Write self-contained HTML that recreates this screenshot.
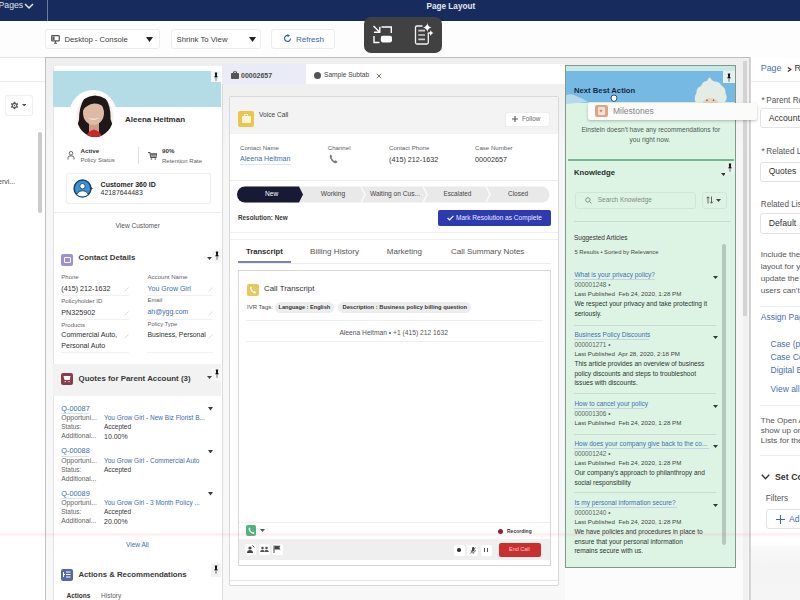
<!DOCTYPE html>
<html><head><meta charset="utf-8">
<style>
*{box-sizing:border-box;margin:0;padding:0}
html,body{width:800px;height:600px;overflow:hidden;background:#fff;font-family:"Liberation Sans",sans-serif;color:#2b2b2b}
div,span,svg{position:absolute}
.t{white-space:nowrap;line-height:1}
.g{color:#626262}
.l{color:#3a6db0}
.b{font-weight:bold}
.ln{height:1px;background:#e6e6e6}
</style></head>
<body>
<!-- ========== TOP NAV ========== -->
<div style="left:0;top:0;width:800px;height:21px;background:#172c5c"></div>
<div style="left:47px;top:0;width:1px;height:21px;background:#6a7ca3"></div>
<div class="t" style="left:-1.5px;top:0.6px;font-size:8.7px;color:#dfe6f2">Pages</div>
<svg style="left:24px;top:2px" width="10" height="8" viewBox="0 0 10 8"><path d="M1 2 L5 6 L9 2" stroke="#dfe6f2" stroke-width="1.5" fill="none"/></svg>
<div class="t b" style="left:426.5px;top:2.5px;font-size:8.2px;color:#e3e9f4">Page Layout</div>

<!-- ========== TOOLBAR ========== -->
<div style="left:0;top:21px;width:800px;height:36px;background:#fdfdfd"></div>
<div style="left:45px;top:29px;width:115px;height:20px;background:#fff;border:1px solid #ececec;border-radius:3px"></div>
<svg style="left:51px;top:35px" width="9" height="9" viewBox="0 0 9 9"><rect x="0.7" y="0.7" width="7.6" height="5.2" rx="0.6" fill="none" stroke="#555" stroke-width="1.2"/><rect x="1.5" y="1.5" width="2" height="3.6" fill="#555"/><path d="M4.5 6 V8 M3 8.3 H6" stroke="#555" stroke-width="1.1"/></svg>
<div class="t" style="left:64.5px;top:35.5px;font-size:7.7px;color:#3e3e3e">Desktop - Console</div>
<svg style="left:146px;top:37px" width="7" height="5" viewBox="0 0 7 5"><path d="M0 0 H7 L3.5 5Z" fill="#222"/></svg>
<div style="left:171px;top:29px;width:90px;height:20px;background:#fff;border:1px solid #ececec;border-radius:3px"></div>
<div class="t" style="left:176.5px;top:35.5px;font-size:7.75px;color:#3e3e3e">Shrink To View</div>
<svg style="left:249px;top:37px" width="7" height="5" viewBox="0 0 7 5"><path d="M0 0 H7 L3.5 5Z" fill="#222"/></svg>
<div style="left:271px;top:29px;width:64px;height:20px;background:#fff;border:1px solid #ececec;border-radius:3px"></div>
<svg style="left:283px;top:34px" width="9" height="9" viewBox="0 0 9 9"><path d="M7.5 4.5 A3 3 0 1 1 5.5 1.6" fill="none" stroke="#3867b0" stroke-width="1.2"/><path d="M4.2 0 L7.2 1.5 L4.6 3.3Z" fill="#3867b0"/></svg>
<div class="t" style="left:296px;top:35.5px;font-size:8px;color:#3867b0">Refresh</div>

<!-- left side panel -->
<div style="left:0;top:57px;width:45px;height:1px;background:#e4e4e4"></div>
<div style="left:0;top:81px;width:45px;height:1px;background:#ececec"></div>
<div style="left:4.5px;top:95px;width:28px;height:20.5px;background:#fff;border:1px solid #f0f0f0;border-radius:3px;box-shadow:0 0 1px rgba(0,0,0,.06)"></div>
<svg style="left:9px;top:99.5px" width="11" height="11" viewBox="0 0 11 11"><path d="M8.25 6.04 L9.20 6.74 L8.42 8.08 L7.34 7.61 L6.41 8.15 L6.27 9.32 L4.73 9.32 L4.59 8.15 L3.66 7.61 L2.58 8.08 L1.80 6.74 L2.75 6.04 L2.75 4.96 L1.80 4.26 L2.58 2.92 L3.66 3.39 L4.59 2.85 L4.73 1.68 L6.27 1.68 L6.41 2.85 L7.34 3.39 L8.42 2.92 L9.20 4.26 L8.25 4.96Z" fill="#5a5a5a"/><circle cx="5.5" cy="5.5" r="1.6" fill="#fff"/><circle cx="5.5" cy="5.5" r="0.7" fill="#5a5a5a"/></svg>
<svg style="left:21.5px;top:103.5px" width="4.5" height="2.5" viewBox="0 0 4.5 2.5"><path d="M0 0H4.5L2.25 2.5Z" fill="#555"/></svg>
<div class="t" style="left:-2px;top:177.5px;font-size:7px;color:#444">ervi...</div>
<div style="left:38px;top:132px;width:4px;height:81px;background:#cbcbcb;border-radius:2px"></div>

<!-- ========== CANVAS FRAME ========== -->
<div style="left:45px;top:57px;width:705px;height:543px;background:linear-gradient(to bottom,#efefef 0,#f0f0f0 40px,#f6f6f6 90px,#f8f8f8 100%);border-left:1.6px solid #c0c0c0;border-top:1.6px solid #bcbcbc;border-right:1.2px solid #cdcdcd"></div>
<!-- frame scrollbar -->
<div style="left:742.5px;top:63px;width:5px;height:537px;background:#f1f1f1"></div>
<div style="left:743px;top:61px;width:4px;height:255px;background:#d3d3d3"></div>


<!-- ========== LEFT COLUMN CARD ========== -->
<div style="left:52.5px;top:66px;width:170px;height:534px;background:#fff;border-left:1px solid #e4e4e4;border-right:1px solid #dcdcdc"></div>
<div style="left:53px;top:71px;width:168px;height:36px;background:#b3dce6"></div>
<!-- pin box -->
<div style="left:211px;top:71px;width:10px;height:11px;background:#f4f9fb"></div>
<svg style="left:213px;top:72px" width="6" height="9" viewBox="0 0 6 9"><path d="M1.8 0.6 H4.2 L3.9 3.8 L5 5.2 H1 L2.1 3.8Z" fill="#151515"/><path d="M3 5 V8.8" stroke="#333" stroke-width="0.7"/></svg>
<!-- avatar -->
<svg style="left:69px;top:89px" width="50" height="50" viewBox="0 0 50 50">
 <circle cx="24" cy="24.5" r="23.5" fill="#fff"/>
 <clipPath id="av"><ellipse cx="26" cy="27" rx="18.5" ry="21"/></clipPath>
 <g clip-path="url(#av)">
  <rect x="0" y="0" width="50" height="50" fill="#f3efec"/>
  <path d="M15 10 Q26 3 37 10 Q42 18 41.5 30 Q46 40 44 50 L8 50 Q6 40 10 31 Q10 18 15 10Z" fill="#201818"/>
  <path d="M20 33 H30 V43 H20Z" fill="#c99f8a"/>
  <ellipse cx="24.5" cy="24" rx="10.5" ry="12" fill="#dcbaa6"/>
  <path d="M14 21 Q15 9 26 8.5 Q35 9 36.5 19 Q32 14.5 25 14.5 Q18 15.5 14 21Z" fill="#201818"/>
  <path d="M18.5 28.5 Q24.5 33 30.5 28.5 Q24.5 31 18.5 28.5Z" fill="#faf4ef"/>
  <path d="M16.5 50 Q18 42 25 40.5 Q32 42 33.5 50Z" fill="#c62a2c"/>
 </g>
</svg>
<div class="t b" style="left:125px;top:116px;font-size:8px;color:#2d2d2d">Aleena Heitman</div>
<!-- stats -->
<svg style="left:67px;top:151px" width="8" height="9" viewBox="0 0 8 9"><circle cx="4" cy="2.3" r="1.8" fill="none" stroke="#666" stroke-width="1"/><path d="M1 8.5 V6.5 Q1 4.8 4 4.8 Q7 4.8 7 6.5 V8.5" fill="none" stroke="#666" stroke-width="1"/></svg>
<div class="t b" style="left:80.5px;top:148px;font-size:6.2px;color:#333">Active</div>
<div class="t g" style="left:80.5px;top:157.5px;font-size:5.95px">Policy Status</div>
<div style="left:137.5px;top:147px;width:1px;height:17px;background:#e0e0e0"></div>
<svg style="left:148px;top:152px" width="9" height="8" viewBox="0 0 9 8"><path d="M0 0.5 H1.8 L2.8 5.5 H8 L8.6 1.8 H2.2" fill="none" stroke="#555" stroke-width="1.1"/><path d="M3 2.6 H8 M3.5 4 H7.8 M4 1.8 V5.5 M6 1.8 V5.5" stroke="#555" stroke-width="0.7"/><circle cx="3.5" cy="7" r="0.8" fill="#555"/><circle cx="7.3" cy="7" r="0.8" fill="#555"/></svg>
<div class="t b" style="left:162px;top:148px;font-size:6.2px;color:#333">90%</div>
<div class="t g" style="left:162px;top:157.5px;font-size:6px">Retention Rate</div>
<!-- customer 360 box -->
<div style="left:66px;top:173px;width:145px;height:31px;border:1px solid #f0f0f0;border-radius:3px;background:#fff;box-shadow:0 0 1.5px rgba(0,0,0,.07)"></div>
<svg style="left:73px;top:179px" width="21" height="19" viewBox="0 0 21 19">
 <clipPath id="c36"><circle cx="9.5" cy="9.5" r="8"/></clipPath>
 <circle cx="9.5" cy="9.5" r="8.4" fill="#3a93d2" stroke="#17456f" stroke-width="1.5"/>
 <g clip-path="url(#c36)">
  <path d="M3.5 18 Q3.5 11.8 9.5 11.8 Q15.5 11.8 15.5 18Z" fill="#fff" stroke="#17456f" stroke-width="0.9"/>
 </g>
 <circle cx="9.5" cy="7.2" r="2.7" fill="#fff" stroke="#17456f" stroke-width="0.9"/>
 <path d="M17.2 7.6 L19.8 9.6 L17.2 11.4Z" fill="#17456f"/>
</svg>
<div class="t b" style="left:100.6px;top:180.5px;font-size:7px;color:#222">Customer 360 ID</div>
<div class="t" style="left:100.6px;top:190px;font-size:6.9px;color:#333">42187644483</div>
<div class="ln" style="left:53px;top:212px;width:168px;background:#ebebeb"></div>
<div class="t" style="left:115.6px;top:222.5px;font-size:6.55px;color:#555">View Customer</div>

<!-- contact details -->
<div style="left:61px;top:253.5px;width:12px;height:12px;background:#9c8fdb;border-radius:2px"></div>
<div style="left:63.5px;top:256.5px;width:7px;height:6px;border:1px solid #fff;border-radius:1px"></div>
<div class="t b" style="left:78.6px;top:254px;font-size:7.8px;color:#383838">Contact Details</div>
<svg style="left:207px;top:257px" width="5" height="3" viewBox="0 0 5 3"><path d="M0 0H5L2.5 3Z" fill="#444"/></svg>
<div style="left:212px;top:250px;width:9px;height:13px;background:#f7f7f7"></div>
<svg style="left:214px;top:251px" width="6" height="9" viewBox="0 0 6 9"><path d="M1.8 0.6 H4.2 L3.9 3.8 L5 5.2 H1 L2.1 3.8Z" fill="#151515"/><path d="M3 5 V8.8" stroke="#333" stroke-width="0.7"/></svg>

<div class="t g" style="left:61.3px;top:274px;font-size:6px">Phone</div>
<div class="t" style="left:61.3px;top:284.5px;font-size:7.2px;color:#2e2e2e">(415) 212-1632</div>
<div class="ln" style="left:61px;top:295px;width:68px;background:#f1f1f1"></div>
<div class="t g" style="left:61.3px;top:298px;font-size:6.1px">Policyholder ID</div>
<div class="t" style="left:61.3px;top:308.5px;font-size:7.2px;color:#2e2e2e">PN325902</div>
<div class="ln" style="left:61px;top:319px;width:68px;background:#f1f1f1"></div>
<div class="t g" style="left:61.3px;top:322px;font-size:6px">Products</div>
<div class="t" style="left:61.3px;top:332px;font-size:7.1px;color:#2e2e2e">Commercial Auto,</div>
<div class="t" style="left:61.3px;top:342px;font-size:7.05px;color:#2e2e2e">Personal Auto</div>
<div class="ln" style="left:61px;top:352px;width:68px;background:#f1f1f1"></div>

<div class="t g" style="left:147.5px;top:274px;font-size:6.1px">Account Name</div>
<div class="t l" style="left:147.5px;top:284.5px;font-size:7px">You Grow Girl</div>
<div class="ln" style="left:147px;top:295px;width:66px;background:#f1f1f1"></div>
<div class="t g" style="left:147.5px;top:298px;font-size:5.9px">Email</div>
<div class="t l" style="left:147.5px;top:308.5px;font-size:6.9px">ah@ygg.com</div>
<div class="ln" style="left:147px;top:319px;width:66px;background:#f1f1f1"></div>
<div class="t g" style="left:147.5px;top:322px;font-size:5.85px">Policy Type</div>
<div class="t" style="left:147.5px;top:332px;font-size:6.8px;color:#2e2e2e">Business, Personal</div>
<div class="ln" style="left:147px;top:352px;width:66px;background:#f1f1f1"></div>

<svg style="left:124px;top:287px" width="5" height="5" viewBox="0 0 5 5"><path d="M0.5 4.5 L4.5 0.5" stroke="#dcdcdc" stroke-width="1"/></svg>
<svg style="left:124px;top:311px" width="5" height="5" viewBox="0 0 5 5"><path d="M0.5 4.5 L4.5 0.5" stroke="#dcdcdc" stroke-width="1"/></svg>
<svg style="left:124px;top:334px" width="5" height="5" viewBox="0 0 5 5"><path d="M0.5 4.5 L4.5 0.5" stroke="#dcdcdc" stroke-width="1"/></svg>
<svg style="left:208px;top:287px" width="5" height="5" viewBox="0 0 5 5"><path d="M0.5 4.5 L4.5 0.5" stroke="#dcdcdc" stroke-width="1"/></svg>
<svg style="left:208px;top:311px" width="5" height="5" viewBox="0 0 5 5"><path d="M0.5 4.5 L4.5 0.5" stroke="#dcdcdc" stroke-width="1"/></svg>
<svg style="left:208px;top:334px" width="5" height="5" viewBox="0 0 5 5"><path d="M0.5 4.5 L4.5 0.5" stroke="#dcdcdc" stroke-width="1"/></svg>
<!-- quotes -->
<div style="left:53px;top:364px;width:168px;height:32px;background:#f2f2f2"></div>
<div style="left:61px;top:373px;width:12px;height:12px;background:#8a3b4c;border-radius:2px"></div>
<svg style="left:63px;top:375px" width="8" height="8" viewBox="0 0 8 8"><path d="M0.5 1 H7.5 L6.8 5 H1.6Z" fill="#fff"/><circle cx="2.3" cy="6.6" r="0.7" fill="#fff"/><circle cx="6" cy="6.6" r="0.7" fill="#fff"/></svg>
<div class="t b" style="left:78.6px;top:374.5px;font-size:7.9px;color:#383838">Quotes for Parent Account (3)</div>
<svg style="left:207px;top:376px" width="5" height="3" viewBox="0 0 5 3"><path d="M0 0H5L2.5 3Z" fill="#444"/></svg>
<div style="left:212px;top:368px;width:9px;height:13px;background:#f7f7f7"></div>
<svg style="left:214px;top:369px" width="6" height="9" viewBox="0 0 6 9"><path d="M1.8 0.6 H4.2 L3.9 3.8 L5 5.2 H1 L2.1 3.8Z" fill="#151515"/><path d="M3 5 V8.8" stroke="#333" stroke-width="0.7"/></svg>
<div class="t l" style="left:61.3px;top:404.6px;font-size:7.3px">Q-00087</div>
<div class="ln" style="left:61px;top:412.8px;width:28px;background:#d6e0ee"></div>
<svg style="left:207.5px;top:407.1px" width="5" height="3.5" viewBox="0 0 5 3.5"><path d="M0 0H5L2.5 3.5Z" fill="#3a3a3a"/></svg>
<div class="t g" style="left:61.3px;top:414.8px;font-size:6.8px">Opportuni...</div>
<div class="t l" style="left:104px;top:414.8px;font-size:6.5px">You Grow Girl - New Biz Florist B...</div>
<div class="t g" style="left:61.3px;top:424.3px;font-size:6.4px">Status:</div>
<div class="t" style="left:104px;top:424.3px;font-size:6.5px;color:#333">Accepted</div>
<div class="t g" style="left:61.3px;top:433.3px;font-size:6.7px">Additional...</div>
<div class="t" style="left:104px;top:433.3px;font-size:7px;color:#333">10.00%</div>
<div class="t l" style="left:61.3px;top:447.3px;font-size:7.3px">Q-00088</div>
<div class="ln" style="left:61px;top:455.5px;width:28px;background:#d6e0ee"></div>
<svg style="left:207.5px;top:449.8px" width="5" height="3.5" viewBox="0 0 5 3.5"><path d="M0 0H5L2.5 3.5Z" fill="#3a3a3a"/></svg>
<div class="t g" style="left:61.3px;top:457.5px;font-size:6.8px">Opportuni...</div>
<div class="t l" style="left:104px;top:457.5px;font-size:6.5px">You Grow Girl - Commercial Auto</div>
<div class="t g" style="left:61.3px;top:467px;font-size:6.4px">Status:</div>
<div class="t" style="left:104px;top:467px;font-size:6.5px;color:#333">Accepted</div>
<div class="t g" style="left:61.3px;top:476px;font-size:6.7px">Additional...</div>
<div class="t" style="left:104px;top:476px;font-size:7px;color:#333"></div>
<div class="t l" style="left:61.3px;top:489.6px;font-size:7.3px">Q-00089</div>
<div class="ln" style="left:61px;top:497.8px;width:28px;background:#d6e0ee"></div>
<svg style="left:207.5px;top:492.1px" width="5" height="3.5" viewBox="0 0 5 3.5"><path d="M0 0H5L2.5 3.5Z" fill="#3a3a3a"/></svg>
<div class="t g" style="left:61.3px;top:499.8px;font-size:6.8px">Opportuni...</div>
<div class="t l" style="left:104px;top:499.8px;font-size:6.5px">You Grow Girl - 3 Month Policy ...</div>
<div class="t g" style="left:61.3px;top:509.3px;font-size:6.4px">Status:</div>
<div class="t" style="left:104px;top:509.3px;font-size:6.5px;color:#333">Accepted</div>
<div class="t g" style="left:61.3px;top:518.3px;font-size:6.7px">Additional...</div>
<div class="t" style="left:104px;top:518.3px;font-size:7px;color:#333">20.00%</div>

<div class="t l" style="left:126px;top:541.5px;font-size:6.5px">View All</div>
<div style="left:61px;top:568.5px;width:12px;height:12px;background:#5867a6;border-radius:2px"></div>
<svg style="left:63px;top:571px" width="8" height="7" viewBox="0 0 8 7"><path d="M0.5 1 V6 M3 1 H7.5 M3 3.5 H7.5 M3 6 H7.5 M0 3.5 H2" stroke="#fff" stroke-width="1"/></svg>
<div class="t b" style="left:78.4px;top:570.7px;font-size:7.8px;color:#383838">Actions &amp; Recommendations</div>
<div style="left:211px;top:563px;width:10px;height:14px;background:#f2f2f2"></div>
<svg style="left:213px;top:565px" width="6" height="9" viewBox="0 0 6 9"><path d="M1.8 0.6 H4.2 L3.9 3.8 L5 5.2 H1 L2.1 3.8Z" fill="#151515"/><path d="M3 5 V8.8" stroke="#333" stroke-width="0.7"/></svg>
<div class="t b" style="left:66.5px;top:593px;font-size:6.5px;color:#333">Actions</div>
<div class="t g" style="left:101px;top:593px;font-size:6.5px">History</div>


<!-- ========== MIDDLE COLUMN ========== -->
<div style="left:222px;top:64px;width:84px;height:20px;background:#e9ecf6"></div>
<div style="left:306px;top:64px;width:259px;height:20px;background:#fff"></div>
<svg style="left:231px;top:71px" width="8" height="8" viewBox="0 0 8 8"><rect x="0" y="2" width="8" height="6" rx="0.8" fill="#555"/><path d="M2.5 2 V0.8 H5.5 V2" fill="none" stroke="#555" stroke-width="1"/></svg>
<div class="t b" style="left:241px;top:71.5px;font-size:7px;color:#4a4a4a">00002657</div>
<div style="left:313.5px;top:71.5px;width:7px;height:7px;border-radius:50%;background:#555"></div>
<div class="t" style="left:324px;top:71.8px;font-size:6.6px;color:#444">Sample Subtab</div>
<svg style="left:375.5px;top:72.5px" width="6" height="6" viewBox="0 0 6 6"><path d="M0.8 0.8 L5.2 5.2 M5.2 0.8 L0.8 5.2" stroke="#666" stroke-width="0.9"/></svg>

<!-- voice call outer card -->
<div style="left:229px;top:96px;width:330px;height:490px;background:#fff;border:1px solid #d9d9d9;border-radius:2px"></div>
<div style="left:230px;top:97px;width:328px;height:37px;background:#f3f3f3"></div>
<div style="left:238px;top:111px;width:15.5px;height:16px;background:#eac64e;border-radius:2px"></div>
<div style="left:241.5px;top:116px;width:9px;height:7px;background:#fff6d8;border-radius:1px"></div><div style="left:244px;top:114px;width:4px;height:2.5px;border:1px solid #fff6d8;border-bottom:none"></div>
<div class="t" style="left:259px;top:111.8px;font-size:6.6px;color:#444">Voice Call</div>
<div style="left:505px;top:111.5px;width:45px;height:15px;background:#fff;border:1px solid #eeeeee;border-radius:3px;box-shadow:0 0 1px rgba(0,0,0,.06)"></div>
<svg style="left:512px;top:116px" width="6" height="6" viewBox="0 0 6 6"><path d="M3 0 V6 M0 3 H6" stroke="#555" stroke-width="1.1"/></svg>
<div class="t" style="left:522px;top:116px;font-size:6.3px;color:#666">Follow</div>

<div class="t g" style="left:240px;top:145px;font-size:6.1px">Contact Name</div>
<div class="t l" style="left:240px;top:155.8px;font-size:7.1px">Aleena Heitman</div>
<div style="left:240px;top:164px;width:51px;height:1px;background:#dce6f1"></div>
<div class="t g" style="left:327.8px;top:145px;font-size:6.1px">Channel</div>
<svg style="left:329px;top:154px" width="9" height="10" viewBox="0 0 9 10"><path d="M1.5 0.8 Q0.3 1.5 0.8 3.5 Q2 7 5 8.8 Q7 9.8 8 8.5 L8.5 7.8 L6.5 6.3 L5.6 7 Q3.5 6 2.5 3.5 L3.2 2.6 L2 0.6Z" fill="#7a7a7a"/></svg>
<div class="t g" style="left:389px;top:145px;font-size:6.1px">Contact Phone</div>
<div class="t" style="left:389px;top:155.6px;font-size:7.2px;color:#333">(415) 212-1632</div>
<div class="t g" style="left:475px;top:145px;font-size:6.1px">Case Number</div>
<div class="t" style="left:475px;top:155.6px;font-size:7.2px;color:#333">00002657</div>
<div class="ln" style="left:230px;top:180px;width:328px;background:#ececec"></div>

<!-- path -->
<svg style="left:237px;top:186px" width="315" height="17" viewBox="0 0 315 17">
 <path d="M8 0.5 H304.5 A8 8 0 0 1 304.5 16.5 H8 A8 8 0 0 1 8 0.5Z" fill="#e9e9e9"/>
 <path d="M8 0.5 H62 L66 8.5 L62 16.5 H8 A8 8 0 0 1 8 0.5Z" fill="#171935"/>
 <path d="M124 0.5 L128 8.5 L124 16.5 M186 0.5 L190 8.5 L186 16.5 M249 0.5 L253 8.5 L249 16.5" stroke="#fafafa" stroke-width="1.6" fill="none"/>
</svg>
<div class="t" style="left:265px;top:191px;font-size:6.6px;color:#fff">New</div>
<div class="t" style="left:320.8px;top:191px;font-size:6.7px;color:#444">Working</div>
<div class="t" style="left:370px;top:191px;font-size:6.6px;color:#444">Waiting on Cus...</div>
<div class="t" style="left:443.5px;top:191px;font-size:6.3px;color:#444">Escalated</div>
<div class="t" style="left:508px;top:191px;font-size:6.45px;color:#444">Closed</div>
<div class="t b" style="left:238px;top:215.3px;font-size:6.35px;color:#3a3a3a">Resolution: New</div>
<div style="left:437.5px;top:210px;width:113px;height:16px;background:#2d3ab0;border-radius:2px"></div>
<svg style="left:447px;top:215px" width="7" height="6" viewBox="0 0 7 6"><path d="M0.6 3 L2.6 5 L6.4 0.8" stroke="#fff" stroke-width="1.2" fill="none"/></svg>
<div class="t" style="left:456px;top:214.5px;font-size:6.55px;color:#e8eaff">Mark Resolution as Complete</div>
<div class="ln" style="left:230px;top:232px;width:328px;background:#efefef"></div>
<div class="ln" style="left:230px;top:239px;width:328px;background:#f0f0f0"></div>

<!-- tabs -->
<div class="t b" style="left:246px;top:248.3px;font-size:7.6px;color:#2b2b2b">Transcript</div>
<div class="t" style="left:310px;top:248.3px;font-size:8.1px;color:#555">Billing History</div>
<div class="t" style="left:386.8px;top:248.3px;font-size:8px;color:#555">Marketing</div>
<div class="t" style="left:451px;top:248.3px;font-size:8px;color:#555">Call Summary Notes</div>
<div class="ln" style="left:238px;top:263px;width:313px;background:#ececec"></div>
<div style="left:238px;top:261px;width:52.5px;height:2px;background:#7c83b3"></div>

<!-- transcript card -->
<div style="left:238px;top:270px;width:313px;height:296px;border:1px solid #d8d8d8;background:#fff"></div>
<div style="left:246.5px;top:283.5px;width:12px;height:12px;background:#e8c85e;border-radius:2px"></div>
<svg style="left:248.5px;top:285.5px" width="8" height="8" viewBox="0 0 9 10"><path d="M1.5 0.8 Q0.3 1.5 0.8 3.5 Q2 7 5 8.8 Q7 9.8 8 8.5 L8.5 7.8 L6.5 6.3 L5.6 7 Q3.5 6 2.5 3.5 L3.2 2.6 L2 0.6Z" fill="#fff"/></svg>
<div class="t" style="left:264px;top:284.5px;font-size:7.9px;color:#333">Call Transcript</div>
<div class="t" style="left:247px;top:304.3px;font-size:6px;color:#4a4a4a">IVR Tags:</div>
<div style="left:274.5px;top:302px;width:59px;height:11px;background:#ededed;border-radius:5.5px"></div>
<div class="t b" style="left:278.6px;top:305px;font-size:5.6px;color:#333">Language : English</div>
<div style="left:338px;top:302px;width:133px;height:11px;background:#ededed;border-radius:5.5px"></div>
<div class="t b" style="left:342.5px;top:305px;font-size:5.75px;color:#333">Description : Business policy billing question</div>
<div class="ln" style="left:246px;top:320px;width:297px;background:#efefef"></div>
<div class="t" style="left:339.4px;top:329.5px;font-size:6.7px;color:#555">Aleena Heitman • +1 (415) 212 1632</div>
<div class="ln" style="left:246px;top:341px;width:297px;background:#f0f0f0"></div>
<div class="ln" style="left:239px;top:522px;width:311px;background:#efefef"></div>
<div style="left:245.8px;top:525px;width:10.5px;height:10.5px;background:#4bb57a;border-radius:2px"></div>
<svg style="left:247.5px;top:526.5px" width="7" height="7.5" viewBox="0 0 9 10"><path d="M1.5 0.8 Q0.3 1.5 0.8 3.5 Q2 7 5 8.8 Q7 9.8 8 8.5 L8.5 7.8 L6.5 6.3 L5.6 7 Q3.5 6 2.5 3.5 L3.2 2.6 L2 0.6Z" fill="#fff"/></svg>
<svg style="left:260px;top:529px" width="5" height="3" viewBox="0 0 5 3"><path d="M0 0H5L2.5 3Z" fill="#555"/></svg>
<div style="left:498px;top:528.5px;width:5px;height:5px;border-radius:50%;background:#8a1f3a"></div>
<div class="t b" style="left:507px;top:529px;font-size:5px;color:#3a3a3a">Recording</div>
<div style="left:239px;top:538.5px;width:311px;height:21.5px;background:#efefef"></div>
<div style="left:244.5px;top:543.5px;width:11px;height:11px;background:#fff;border-radius:2px"></div>
<div style="left:258.5px;top:543.5px;width:11px;height:11px;background:#fff;border-radius:2px"></div>
<div style="left:271.5px;top:543.5px;width:11px;height:11px;background:#fff;border-radius:2px"></div>
<svg style="left:246px;top:545px" width="9" height="8" viewBox="0 0 9 8"><circle cx="4" cy="3" r="1.6" fill="#444"/><path d="M1 8 Q1 5 4 5 Q7 5 7 8Z" fill="#444"/><path d="M6.5 0.5 L8.5 2.5" stroke="#444" stroke-width="0.9"/></svg>
<svg style="left:260px;top:546px" width="9" height="6" viewBox="0 0 9 6"><circle cx="2.5" cy="2" r="1.3" fill="#555"/><circle cx="6.5" cy="2" r="1.3" fill="#555"/><path d="M0 6 Q0.5 3.8 2.5 3.8 Q4.5 3.8 4.5 6Z M4.5 6 Q4.5 3.8 6.5 3.8 Q8.5 3.8 9 6Z" fill="#555"/></svg>
<svg style="left:273px;top:545px" width="8" height="8" viewBox="0 0 8 8"><path d="M1 0.5 V8" stroke="#444" stroke-width="1"/><path d="M1.5 0.8 H7.5 L6.3 2.6 L7.5 4.4 H1.5Z" fill="#444"/></svg>
<div style="left:453.5px;top:544.5px;width:11px;height:11px;background:#fff;border-radius:2px"></div>
<div style="left:467px;top:544.5px;width:11px;height:11px;background:#fff;border-radius:2px"></div>
<div style="left:480.5px;top:544.5px;width:11px;height:11px;background:#fff;border-radius:2px"></div>
<div style="left:457.2px;top:548.2px;width:3.6px;height:3.6px;border-radius:50%;background:#333"></div>
<svg style="left:469.5px;top:546.5px" width="6" height="7" viewBox="0 0 6 7"><rect x="2" y="0" width="2.4" height="4.2" rx="1.2" fill="#444"/><path d="M1 3 Q1 5.3 3.2 5.3 Q5.4 5.3 5.4 3 M3.2 5.3 V7" stroke="#444" stroke-width="0.7" fill="none"/><path d="M0.5 6.5 L5.5 0.5" stroke="#444" stroke-width="0.7"/></svg>
<div style="left:484.3px;top:547.8px;width:1.2px;height:4.5px;background:#555"></div>
<div style="left:486.7px;top:547.8px;width:1.2px;height:4.5px;background:#555"></div>
<div style="left:498.5px;top:543px;width:42px;height:13.5px;background:#c7302f;border-radius:2px"></div>
<div class="t" style="left:509px;top:547.3px;font-size:5.5px;color:#f6cccc">End Call</div>
<div class="ln" style="left:230px;top:580px;width:328px;background:#e6e6e6"></div>


<!-- ========== NBA / KNOWLEDGE COLUMN (green overlay) ========== -->
<div style="left:565px;top:560px;width:178px;height:40px;background:#fcfcfc"></div>
<div style="left:565px;top:65px;width:171px;height:502.5px;background:#ddf4e5;border:1px solid #7e9a86"></div>
<div style="left:566px;top:66px;width:169px;height:5.5px;background:#c9eae4"></div>
<svg style="left:566px;top:71px" width="169" height="33" viewBox="0 0 169 33">
 <path d="M0 0 H169 V31 H24 Q18 33 12 31 Q6 29 0 30Z" fill="#76b9e2"/>
 <path d="M0 24 Q6 22 10 25 Q16 27 22 31 L0 33Z" fill="#b7d9ea"/>
</svg>
<!-- einstein -->
<svg style="left:690px;top:76px" width="45" height="28" viewBox="0 0 45 28">
 <path d="M5.5 26 Q3.5 21 6.5 17 Q6 12 11 10 Q13 5 17 5 Q18.5 1 20 1.5 Q21.5 4 24 5.5 Q29 5 31.5 9.5 Q36 12 35.5 17.5 Q38 22 35 26Z" fill="#e3ede6"/>
 <ellipse cx="20.5" cy="26.5" rx="7.5" ry="4.5" fill="#ecd2bb"/>
 <circle cx="17" cy="24.3" r="0.8" fill="#555"/><circle cx="23.5" cy="24.3" r="0.8" fill="#555"/>
</svg>
<div style="left:723px;top:71px;width:12px;height:12px;background:#e4f2ee"></div>
<svg style="left:726px;top:72.5px" width="6" height="9" viewBox="0 0 6 9"><path d="M1.8 0.6 H4.2 L3.9 3.8 L5 5.2 H1 L2.1 3.8Z" fill="#151515"/><path d="M3 5 V8.8" stroke="#333" stroke-width="0.7"/></svg>
<div class="t b" style="left:574px;top:87.3px;font-size:7.7px;color:#172a4a">Next Best Action</div>
<!-- milestones drag card -->
<div style="left:588px;top:102.5px;width:169px;height:17.5px;background:#fbfbf9;border-radius:2px;box-shadow:0 1px 3px rgba(0,0,0,.25);z-index:20"></div>
<div style="left:595px;top:104.5px;width:12.5px;height:12.5px;background:#dba587;border-radius:2px;z-index:21"></div>
<div style="left:597.5px;top:107px;width:7.5px;height:7.5px;background:#f4e0d4;border-radius:1px;z-index:21"></div>
<svg style="left:599px;top:109px;z-index:22" width="4" height="4" viewBox="0 0 4 4"><path d="M0.3 0.8 H3.7 L2 3.4Z" fill="#c9876a"/></svg>
<div class="t" style="left:613px;top:106.8px;font-size:8.5px;color:#858585;z-index:21">Milestones</div>
<svg style="left:609px;top:93px;z-index:30" width="10" height="10" viewBox="0 0 10 10"><path d="M2 5 Q2 2 5 2 Q8 2 8 5 Q8 8 5 8.5 Q2 8 2 5Z" fill="#fff" stroke="#2a4d7a" stroke-width="1"/></svg>

<div class="t" style="left:581.4px;top:126.6px;font-size:6.6px;color:#4d5a52">Einstein doesn't have any recommendations for</div>
<div class="t" style="left:629.5px;top:136.6px;font-size:6.6px;color:#4d5a52">you right now.</div>
<div style="left:568px;top:159px;width:166px;height:2px;background:#79b28c"></div>

<div class="t b" style="left:574px;top:168.8px;font-size:7.7px;color:#243028">Knowledge</div>
<svg style="left:721px;top:172.5px" width="5" height="3" viewBox="0 0 5 3"><path d="M0 0H5L2.5 3Z" fill="#333"/></svg>
<div style="left:725px;top:162px;width:10px;height:12px;background:#e5f3ea"></div>
<svg style="left:727px;top:163px" width="6" height="9" viewBox="0 0 6 9"><path d="M1.8 0.6 H4.2 L3.9 3.8 L5 5.2 H1 L2.1 3.8Z" fill="#151515"/><path d="M3 5 V8.8" stroke="#333" stroke-width="0.7"/></svg>
<div style="left:574.5px;top:192px;width:121px;height:17px;border:1px solid #d0e4d7;border-radius:3px;background:#ddf4e5"></div>
<svg style="left:585px;top:196.5px" width="7" height="7" viewBox="0 0 7 7"><circle cx="2.9" cy="2.9" r="2.2" fill="none" stroke="#7a8a80" stroke-width="0.9"/><path d="M4.5 4.5 L6.6 6.6" stroke="#7a8a80" stroke-width="0.9"/></svg>
<div class="t" style="left:597.8px;top:197px;font-size:6.45px;color:#7d8a82">Search Knowledge</div>
<div style="left:702px;top:192px;width:25px;height:17px;border:1px solid #d0e4d7;border-radius:3px;background:#ddf4e5"></div>
<svg style="left:705.5px;top:196px" width="8" height="8" viewBox="0 0 8 8"><path d="M2 7.5 V0.8 M0.5 2.3 L2 0.8 L3.5 2.3 M5.5 0.5 V7.2 M4 5.7 L5.5 7.2 L7 5.7" stroke="#555" stroke-width="0.9" fill="none"/></svg>
<svg style="left:716px;top:198.5px" width="5" height="3" viewBox="0 0 5 3"><path d="M0 0H5L2.5 3Z" fill="#444"/></svg>
<div style="left:574px;top:221px;width:157px;height:1px;background:#c8ddcf"></div>
<div class="t" style="left:574px;top:234.8px;font-size:6.47px;color:#333">Suggested Articles</div>
<div class="t" style="left:574.4px;top:249.6px;font-size:5.86px;color:#444">5 Results • Sorted by Relevance</div>
<div style="left:721.5px;top:244px;width:4.5px;height:301px;background:#b5c8bb;border-radius:2px"></div>
<div class="t l" style="left:574.4px;top:271.7px;font-size:6.5px;color:#4170ae">What is your privacy policy?</div>
<div style="left:574.4px;top:279.3px;width:81px;height:1px;background:#c3d3e6"></div>
<svg style="left:712.5px;top:275.5px" width="5" height="3" viewBox="0 0 5 3"><path d="M0 0H5L2.5 3Z" fill="#333"/></svg>
<div class="t" style="left:574.4px;top:282.3px;font-size:6.4px;color:#606660">000001248 •</div>
<div class="t" style="left:574.4px;top:290.5px;font-size:6.2px;color:#3e4540">Last Published&nbsp; Feb 24, 2020, 1:28 PM</div>
<div class="t" style="left:574.4px;top:301.3px;font-size:6.55px;color:#2e3530">We respect your privacy and take protecting it</div>
<div class="t" style="left:574.4px;top:310.8px;font-size:6.55px;color:#2e3530">seriously.</div>
<div style="left:574px;top:325px;width:142px;height:1px;background:#c8ddcf"></div>
<div class="t l" style="left:574.4px;top:331.7px;font-size:6.5px;color:#4170ae">Business Policy Discounts</div>
<div style="left:574.4px;top:339.3px;width:75px;height:1px;background:#c3d3e6"></div>
<svg style="left:712.5px;top:335.5px" width="5" height="3" viewBox="0 0 5 3"><path d="M0 0H5L2.5 3Z" fill="#333"/></svg>
<div class="t" style="left:574.4px;top:342.3px;font-size:6.4px;color:#606660">000001271 •</div>
<div class="t" style="left:574.4px;top:350.5px;font-size:6.2px;color:#3e4540">Last Published&nbsp; Apr 28, 2020, 2:18 PM</div>
<div class="t" style="left:574.4px;top:361.3px;font-size:6.55px;color:#2e3530">This article provides an overview of business</div>
<div class="t" style="left:574.4px;top:370.8px;font-size:6.55px;color:#2e3530">policy discounts and steps to troubleshoot</div>
<div class="t" style="left:574.4px;top:380.3px;font-size:6.55px;color:#2e3530">issues with discounts.</div>
<div style="left:574px;top:393px;width:142px;height:1px;background:#c8ddcf"></div>
<div class="t l" style="left:574.4px;top:400.7px;font-size:6.5px;color:#4170ae">How to cancel your policy</div>
<div style="left:574.4px;top:408.3px;width:70px;height:1px;background:#c3d3e6"></div>
<svg style="left:712.5px;top:404.5px" width="5" height="3" viewBox="0 0 5 3"><path d="M0 0H5L2.5 3Z" fill="#333"/></svg>
<div class="t" style="left:574.4px;top:411.3px;font-size:6.4px;color:#606660">000001306 •</div>
<div class="t" style="left:574.4px;top:419.5px;font-size:6.2px;color:#3e4540">Last Published&nbsp; Feb 24, 2020, 1:28 PM</div>
<div style="left:574px;top:434px;width:142px;height:1px;background:#c8ddcf"></div>
<div class="t l" style="left:574.4px;top:440.7px;font-size:6.5px;color:#4170ae">How does your company give back to the co...</div>
<div style="left:574.4px;top:448.3px;width:135px;height:1px;background:#c3d3e6"></div>
<svg style="left:712.5px;top:444.5px" width="5" height="3" viewBox="0 0 5 3"><path d="M0 0H5L2.5 3Z" fill="#333"/></svg>
<div class="t" style="left:574.4px;top:451.3px;font-size:6.4px;color:#606660">000001242 •</div>
<div class="t" style="left:574.4px;top:459.5px;font-size:6.2px;color:#3e4540">Last Published&nbsp; Feb 24, 2020, 1:28 PM</div>
<div class="t" style="left:574.4px;top:470.3px;font-size:6.55px;color:#2e3530">Our company's approach to philanthropy and</div>
<div class="t" style="left:574.4px;top:479.8px;font-size:6.55px;color:#2e3530">social responsibility</div>
<div style="left:574px;top:492px;width:142px;height:1px;background:#c8ddcf"></div>
<div class="t l" style="left:574.4px;top:499.7px;font-size:6.5px;color:#4170ae">Is my personal information secure?</div>
<div style="left:574.4px;top:507.3px;width:103px;height:1px;background:#c3d3e6"></div>
<svg style="left:712.5px;top:503.5px" width="5" height="3" viewBox="0 0 5 3"><path d="M0 0H5L2.5 3Z" fill="#333"/></svg>
<div class="t" style="left:574.4px;top:510.3px;font-size:6.4px;color:#606660">000001240 •</div>
<div class="t" style="left:574.4px;top:518.5px;font-size:6.2px;color:#3e4540">Last Published&nbsp; Feb 24, 2020, 1:28 PM</div>
<div class="t" style="left:574.4px;top:529.3px;font-size:6.55px;color:#2e3530">We have policies and procedures in place to</div>
<div class="t" style="left:574.4px;top:538.8px;font-size:6.55px;color:#2e3530">ensure that your personal information</div>
<div class="t" style="left:574.4px;top:548.3px;font-size:6.55px;color:#2e3530">remains secure with us.</div>

<!-- ========== RIGHT PROPERTIES PANEL ========== -->
<div style="left:750px;top:57px;width:50px;height:543px;background:#fff;border-left:1px solid #d6d6d6"></div>
<div class="t l" style="left:760.75px;top:64.2px;font-size:8.9px;color:#5270aa">Page</div>
<svg style="left:786.5px;top:66.5px" width="5" height="5" viewBox="0 0 5 5"><path d="M0.8 0.6 L3.8 2.5 L0.8 4.4" stroke="#333" stroke-width="1.2" fill="none"/></svg>
<div class="t" style="left:794.5px;top:63.5px;font-size:9px;color:#333">R</div>
<div style="left:751px;top:81px;width:49px;height:1px;background:#ececec"></div>
<div class="t" style="left:761.5px;top:97px;font-size:8.2px;color:#555">*</div>
<div class="t" style="left:766.25px;top:97px;font-size:8.2px;color:#555">Parent Re</div>
<div style="left:760px;top:108px;width:50px;height:20px;border:1px solid #e3e3e3;border-radius:3px"></div>
<div class="t" style="left:768.75px;top:114px;font-size:8.6px;color:#333">Account</div>
<div class="t" style="left:761.5px;top:148px;font-size:8.2px;color:#555">*</div>
<div class="t" style="left:766.25px;top:148px;font-size:8.2px;color:#555">Related L</div>
<div style="left:760px;top:161.5px;width:50px;height:20px;border:1px solid #e3e3e3;border-radius:3px"></div>
<div class="t" style="left:768.75px;top:167px;font-size:8.5px;color:#333">Quotes</div>
<div class="t" style="left:760.75px;top:201px;font-size:8.2px;color:#555">Related Lis</div>
<div style="left:760px;top:213px;width:50px;height:21px;border:1px solid #e3e3e3;border-radius:3px"></div>
<div class="t" style="left:768.75px;top:219px;font-size:8.7px;color:#333">Default</div>
<div class="t" style="left:760.75px;top:251px;font-size:8.1px;color:#555">Include the</div>
<div class="t" style="left:760.75px;top:263px;font-size:8.1px;color:#555">layout for y</div>
<div class="t" style="left:760.75px;top:275px;font-size:8.1px;color:#555">update the</div>
<div class="t" style="left:760.75px;top:287px;font-size:8.1px;color:#555">users can't</div>
<div style="left:760px;top:306px;width:40px;height:1px;background:#ececec"></div>
<div class="t l" style="left:760.75px;top:313px;font-size:8.5px;color:#4a6fb0">Assign Pag</div>
<div class="t l" style="left:770.5px;top:339.7px;font-size:8.5px;color:#4a6fb0">Case (p</div>
<div class="t l" style="left:770.5px;top:353px;font-size:8.5px;color:#4a6fb0">Case Co</div>
<div class="t l" style="left:770.5px;top:366px;font-size:8.5px;color:#4a6fb0">Digital E</div>
<div class="t l" style="left:770.5px;top:384.5px;font-size:8.5px;color:#4a6fb0">View all</div>
<div style="left:760px;top:405px;width:40px;height:1px;background:#ececec"></div>
<div class="t" style="left:760.75px;top:416.5px;font-size:8.1px;color:#555">The Open A</div>
<div class="t" style="left:760.75px;top:427px;font-size:8.1px;color:#555">show up on</div>
<div class="t" style="left:760.75px;top:436.5px;font-size:8.1px;color:#555">Lists for the</div>
<div style="left:760px;top:455px;width:40px;height:1px;background:#ececec"></div>
<svg style="left:761px;top:474px" width="9" height="6" viewBox="0 0 9 6"><path d="M0.8 0.8 L4.5 4.8 L8.2 0.8" stroke="#333" stroke-width="1.4" fill="none"/></svg>
<div class="t b" style="left:775px;top:472.5px;font-size:8.8px;color:#333">Set Co</div>
<div class="t" style="left:765.75px;top:495px;font-size:8.2px;color:#555">Filters</div>
<div style="left:766px;top:509px;width:40px;height:20px;border:1px solid #e3e3e3;border-radius:3px"></div>
<svg style="left:775.5px;top:515px" width="9" height="9" viewBox="0 0 9 9"><path d="M4.5 0 V9 M0 4.5 H9" stroke="#3a6db0" stroke-width="1.1"/></svg>
<div class="t" style="left:789px;top:514.5px;font-size:8.6px;color:#3a6db0">Ad</div>

<div style="left:751px;top:546px;width:49px;height:54px;background:linear-gradient(to bottom,#f9f9f9,#f4f4f4 20px,#f5f5f5)"></div>
<!-- faint red guide line -->
<div style="left:0;top:531.5px;width:800px;height:5px;background:linear-gradient(to bottom,rgba(240,120,140,0),rgba(240,120,140,.13) 50%,rgba(240,120,140,0));z-index:40"></div>

<!-- OVERLAY (PiP controls) -->
<div style="left:364px;top:17px;width:78px;height:36px;background:#414141;border-radius:7px;z-index:50"></div>
<svg style="left:364px;top:17px;z-index:51" width="78" height="36" viewBox="0 0 78 36">
 <g stroke="#fff" stroke-width="1.4" fill="none">
  <path d="M9.5 9 L15.5 15"/><path d="M10 15.3 H15.8 V9.8"/>
  <path d="M17.5 10 H27.3 V16"/>
  <path d="M10 19 V25.5 H15.5"/>
 </g>
 <rect x="16.8" y="18.8" width="11.2" height="6.6" rx="1.8" fill="#fff"/>
 <g stroke="#f4f4f4" stroke-width="1.3" fill="none">
  <path d="M64.3 15.5 V25.5 Q64.3 27 62.8 27 H53 Q51.5 27 51.5 25.5 V10.5 Q51.5 9 53 9 H58.5"/>
 </g>
 <g stroke="#cfcfcf" stroke-width="1.6"><path d="M54.3 13.6 H61 M54.3 18 H61 M54.3 22.4 H61"/></g>
 <path d="M63.3 6 Q63.8 9.9 67.6 10.5 Q63.8 11.1 63.3 15 Q62.8 11.1 59 10.5 Q62.8 9.9 63.3 6Z" fill="#fff"/>
 <path d="M66.8 13 Q67.1 15.6 69.4 16 Q67.1 16.4 66.8 19 Q66.5 16.4 64.2 16 Q66.5 15.6 66.8 13Z" fill="#fff"/>
</svg>

</body></html>
